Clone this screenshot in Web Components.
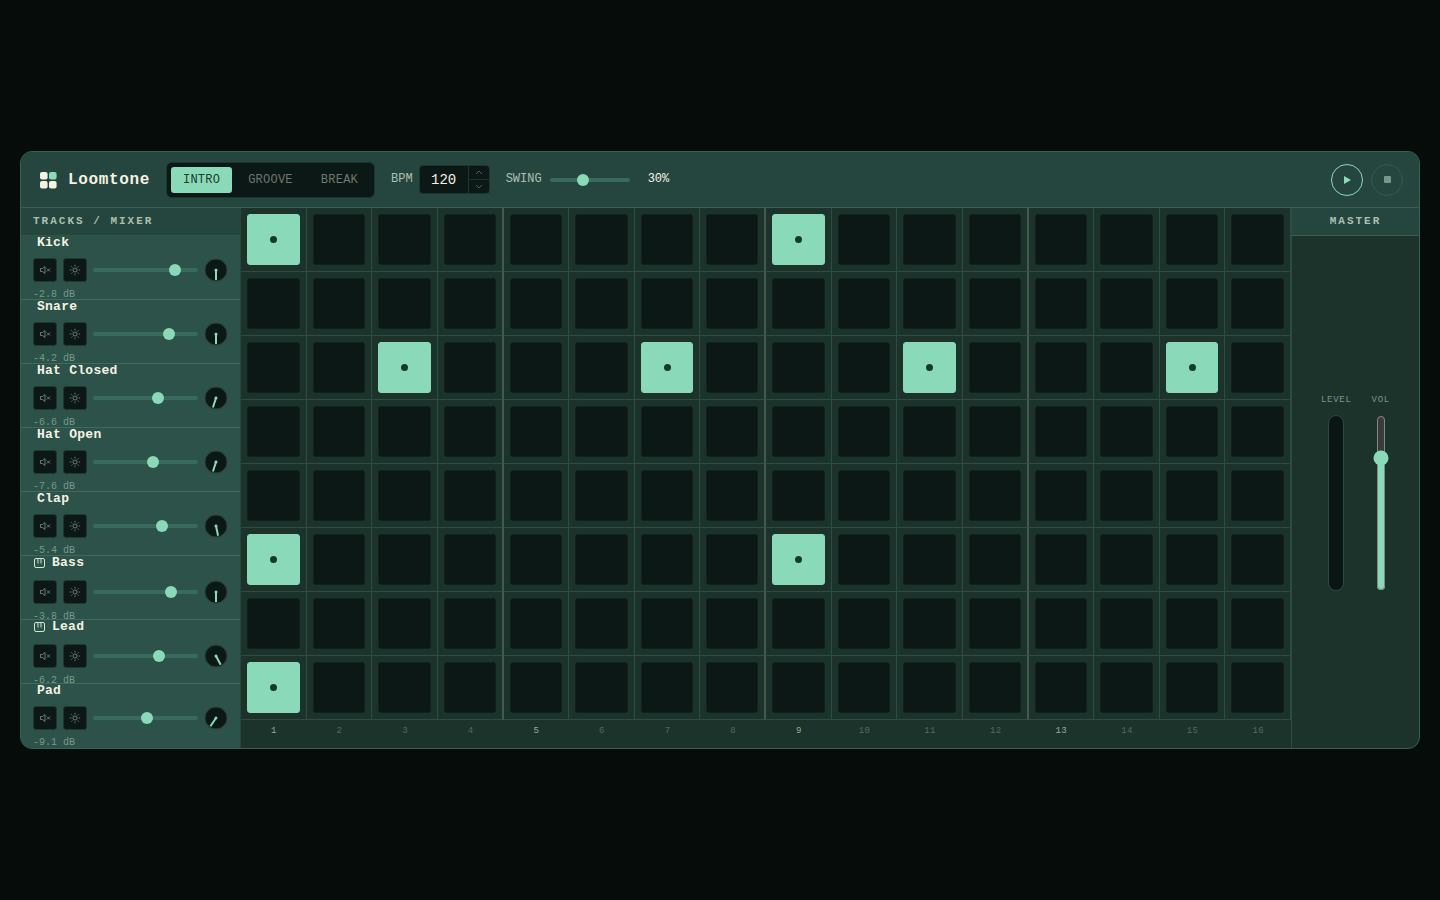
<!DOCTYPE html>
<html lang="en">
<head>
<meta charset="utf-8">
<meta name="viewport" content="width=device-width, initial-scale=1">
<title>Loomtone</title>
<style>
  :root {
    --bg: #060c0a;
    --well: #0c1815;
    --panel: #1c332c;
    --bar: #25463e;
    --row: #2d5249;
    --line: #3b5f55;
    --line-soft: #2d4c42;
    --groove: #396a5e;
    --mint: #8ad9b8;
    --cream: #f5f2e2;
    --muted: #aebfb0;
    --dim: #77988a;
  }

  body {
    margin: 0;
    min-height: 100vh;
    box-sizing: border-box;
    padding: 20px;
    display: grid;
    align-items: center;
    background: var(--bg);
    color: var(--cream);
    font-family: "Liberation Mono", monospace;
    font-size: 12px;
  }
</style>
</head>
<body>
<loom-app>
  <loom-header slot="header"></loom-header>
  <loom-mixer slot="mixer">
    <loom-track name="Kick" volume="82" pan="0" db="-2.8"></loom-track>
    <loom-track name="Snare" volume="75" pan="0" db="-4.2"></loom-track>
    <loom-track name="Hat Closed" volume="63" pan="18" db="-6.6"></loom-track>
    <loom-track name="Hat Open" volume="58" pan="18" db="-7.6"></loom-track>
    <loom-track name="Clap" volume="68" pan="-12" db="-5.4"></loom-track>
    <loom-track name="Bass" volume="77" pan="0" db="-3.8" melodic></loom-track>
    <loom-track name="Lead" volume="65" pan="-28" db="-6.2" melodic></loom-track>
    <loom-track name="Pad" volume="52" pan="34" db="-9.1"></loom-track>
  </loom-mixer>
  <loom-grid slot="grid"></loom-grid>
  <loom-master slot="master"></loom-master>
</loom-app>

<script>
class LoomApp extends HTMLElement {
  constructor() {
    super();
    this.attachShadow({ mode: "open" });
  }

  static get styles() {
    return `
      :host {
        display: block;
        min-width: 0;
        border: 1px solid var(--line);
        border-radius: 12px;
        overflow: hidden;
        background: var(--panel);
      }

      .body {
        display: grid;
        grid-template-columns: 220px minmax(0, 1fr) 128px;
      }
    `;
  }

  connectedCallback() {
    this.shadowRoot.innerHTML = `
    <style>${LoomApp.styles}</style>
    <slot name="header"></slot>
    <main class="body">
      <slot name="mixer"></slot>
      <slot name="grid"></slot>
      <slot name="master"></slot>
    </main>`;
  }
}

class LoomSlider extends HTMLElement {
  constructor() {
    super();
    this.attachShadow({ mode: "open" });
  }

  static get styles() {
    return `
      :host {
        display: flex;
        align-items: center;
      }

      input {
        appearance: none;
        width: 100%;
        height: 12px;
        margin: 0;
        background: none;
      }

      input::-webkit-slider-runnable-track {
        height: 4px;
        border-radius: 2px;
        background: var(--groove);
      }

      input::-webkit-slider-thumb {
        appearance: none;
        width: 12px;
        height: 12px;
        margin-top: -4px;
        border-radius: 50%;
        background: var(--mint);
      }
    `;
  }

  connectedCallback() {
    this.shadowRoot.innerHTML = `
    <style>${LoomSlider.styles}</style>
    <input type="range" min="0" max="100" value="${this.getAttribute("value")}" aria-label="${this.getAttribute("label")}">`;
  }
}

class LoomHeader extends HTMLElement {
  constructor() {
    super();
    this.attachShadow({ mode: "open" });
  }

  static get styles() {
    return `
      :host {
        display: flex;
        align-items: center;
        gap: 16px;
        height: 55px;
        padding: 0 16px 0 18px;
        background: var(--bar);
        border-bottom: 1px solid var(--line);
      }

      .brand {
        display: flex;
        align-items: center;
        gap: 11px;
        font-size: 16px;
        font-weight: 700;
        letter-spacing: 0.04em;
      }

      .scenes {
        display: flex;
        gap: 4px;
        padding: 4px;
        border: 1px solid #1d352f;
        border-radius: 6px;
        background: var(--well);
      }

      button {
        font: inherit;
        color: inherit;
        border: 0;
        background: none;
        padding: 0;
      }

      .scenes button {
        height: 26px;
        padding: 0 12px;
        border-radius: 3px;
        color: #6d7871;
        letter-spacing: 0.02em;
      }

      .scenes button.on {
        background: var(--mint);
        color: #1b3a31;
      }

      .field {
        display: flex;
        align-items: center;
        gap: 6px;
      }

      .field.wide {
        gap: 8px;
      }

      label, output {
        padding-bottom: 2px;
      }

      label {
        color: var(--muted);
      }

      .number {
        display: flex;
        height: 27px;
        border: 1px solid #1d352f;
        border-radius: 4px;
        background: var(--well);
      }

      .number input {
        width: 48px;
        box-sizing: border-box;
        padding: 0;
        border: 0;
        background: none;
        color: var(--cream);
        font: inherit;
        font-size: 14px;
        text-align: center;
        appearance: textfield;
      }

      .number input::-webkit-inner-spin-button {
        display: none;
      }

      .spin {
        display: grid;
        width: 20px;
        border-left: 1px solid #1d352f;
      }

      .spin button {
        display: grid;
        place-items: center;
      }

      .spin button + button {
        border-top: 1px solid #1d352f;
      }

      loom-slider {
        width: 80px;
      }

      output {
        margin-left: 10px;
      }

      .transport {
        display: flex;
        gap: 8px;
        margin-left: auto;
      }

      .transport button {
        display: grid;
        place-items: center;
        width: 32px;
        height: 32px;
        border: 1px solid #36584e;
        border-radius: 50%;
        color: #74988a;
      }

      .transport .play {
        border-color: var(--mint);
        color: var(--mint);
      }
    `;
  }

  connectedCallback() {
    this.shadowRoot.innerHTML = `
    <style>${LoomHeader.styles}</style>
    <div class="brand">
      <svg width="18" height="18" viewBox="0 0 18 18" aria-hidden="true">
        <g fill="#f5f2e2">
          <rect x="1" y="1" width="7.6" height="7.6" rx="2"/>
          <rect x="1" y="10" width="7.6" height="7.6" rx="2"/>
          <rect x="10" y="10" width="7.6" height="7.6" rx="2"/>
        </g>
        <rect x="10" y="1" width="7.6" height="7.6" rx="2" fill="#8ad9b8"/>
      </svg>
      <span>Loomtone</span>
    </div>
    <div class="scenes">
      <button class="on">INTRO</button>
      <button>GROOVE</button>
      <button>BREAK</button>
    </div>
    <div class="field">
      <label for="bpm">BPM</label>
      <div class="number">
        <input id="bpm" type="number" value="120">
        <div class="spin">
          <button aria-label="Faster"><svg width="8" height="5" viewBox="0 0 8 5" fill="none" stroke="#466359"><path d="M1 4l3-3 3 3"/></svg></button>
          <button aria-label="Slower"><svg width="8" height="5" viewBox="0 0 8 5" fill="none" stroke="#466359"><path d="M1 1l3 3 3-3"/></svg></button>
        </div>
      </div>
    </div>
    <div class="field wide">
      <label>SWING</label>
      <loom-slider value="40" label="Swing"></loom-slider>
      <output>30%</output>
    </div>
    <div class="transport">
      <button class="play" aria-label="Play"><svg width="8" height="8" viewBox="0 0 8 8" fill="currentColor"><path d="M1 0l7 4-7 4z"/></svg></button>
      <button aria-label="Stop"><svg width="7" height="7" viewBox="0 0 7 7" fill="currentColor"><rect width="7" height="7" rx="1"/></svg></button>
    </div>`;
    this.shadowRoot.querySelector(".wide label").addEventListener("click", () => {
      this.shadowRoot.querySelector("loom-slider").shadowRoot.querySelector("input").focus();
    });
  }
}

class LoomMixer extends HTMLElement {
  constructor() {
    super();
    this.attachShadow({ mode: "open" });
  }

  static get styles() {
    return `
      :host {
        display: block;
        box-sizing: border-box;
        background: var(--row);
        border-right: 1px solid #28463d;
      }

      h2 {
        height: 27px;
        margin: 0;
        padding: 0 12px;
        background: var(--bar);
        border-bottom: 1px solid #315449;
        color: var(--muted);
        font-size: 11px;
        line-height: 26px;
        letter-spacing: 2px;
      }
    `;
  }

  connectedCallback() {
    this.shadowRoot.innerHTML = `
    <style>${LoomMixer.styles}</style>
    <h2>TRACKS / MIXER</h2>
    <slot></slot>`;
  }
}

class LoomTrack extends HTMLElement {
  constructor() {
    super();
    this.attachShadow({ mode: "open" });
  }

  static get styles() {
    return `
      :host {
        display: flex;
        flex-direction: column;
        box-sizing: border-box;
        height: 64px;
        padding: 0 12px;
        border-bottom: 1px solid #3e6b5f;
      }

      :host(:last-of-type) {
        border-bottom-color: transparent;
      }

      .name {
        flex: none;
        display: flex;
        align-items: center;
        height: 14px;
        margin-bottom: 8px;
        padding-left: 4px;
        font-size: 13px;
        line-height: 14px;
        font-weight: 700;
        letter-spacing: 0.02em;
      }

      :host([melodic]) .name {
        gap: 6px;
        margin-bottom: 10px;
        padding-left: 0;
      }

      .controls {
        flex: none;
        display: flex;
        align-items: center;
        gap: 6px;
        height: 24px;
      }

      button {
        display: grid;
        place-items: center;
        box-sizing: border-box;
        width: 24px;
        height: 24px;
        padding: 0;
        border: 1px solid #1f3832;
        border-radius: 3px;
        background: var(--well);
        color: #83918a;
      }

      loom-slider {
        flex: 1;
      }

      .knob {
        flex: none;
        width: 24px;
        height: 24px;
      }

      .db {
        flex: none;
        color: var(--dim);
        font-size: 10px;
        line-height: 26px;
      }
    `;
  }

  get icon() {
    if (!this.hasAttribute("melodic")) return "";
    return `
      <svg width="13" height="12" viewBox="0 0 13 12" fill="none" stroke="#d5e3d5" aria-hidden="true">
        <rect x="1.5" y="1.5" width="10" height="9" rx="1.5"/>
        <path d="M5 1.5v5M8 1.5v5"/>
      </svg>`;
  }

  connectedCallback() {
    const name = this.getAttribute("name");
    this.shadowRoot.innerHTML = `
    <style>${LoomTrack.styles}</style>
    <div class="name">${this.icon}<span>${name}</span></div>
    <div class="controls">
      <button aria-label="Mute ${name}">
        <svg width="12" height="12" viewBox="0 0 12 12" fill="none" stroke="currentColor" stroke-width="0.8">
          <path d="M1.5 4.5h2l2.5-2v7l-2.5-2h-2zM8 4.5l3 3M11 4.5l-3 3"/>
        </svg>
      </button>
      <button aria-label="Solo ${name}">
        <svg width="12" height="12" viewBox="0 0 12 12" fill="none" stroke="currentColor" stroke-width="0.8">
          <circle cx="6" cy="6" r="2"/>
          <path d="M6 .8v1.7M6 9.5v1.7M.8 6h1.7M9.5 6h1.7M2.3 2.3l1.2 1.2M8.5 8.5l1.2 1.2M9.7 2.3l-1.2 1.2M3.5 8.5l-1.2 1.2"/>
        </svg>
      </button>
      <loom-slider value="${this.getAttribute("volume")}" label="${name} volume"></loom-slider>
      <svg class="knob" viewBox="0 0 24 24" role="img" aria-label="${name} pan">
        <circle cx="12" cy="12" r="11" fill="#0c1815" stroke="#25423a"/>
        <g transform="rotate(${this.getAttribute("pan")} 12 12)">
          <circle cx="12" cy="12" r="1.5" fill="#8ad9b8"/>
          <path d="M12 12v10" stroke="#8ad9b8" stroke-width="2"/>
        </g>
      </svg>
    </div>
    <div class="db">${this.getAttribute("db")} dB</div>`;
  }
}

class LoomGrid extends HTMLElement {
  constructor() {
    super();
    this.attachShadow({ mode: "open" });
    this.steps = 16;
    this.pattern = [[0, 8], [], [2, 6, 10, 14], [], [], [0, 8], [], [0]];
  }

  static get styles() {
    return `
      :host {
        display: block;
      }

      .row {
        display: grid;
        grid-template-columns: repeat(16, minmax(0, 1fr));
      }

      .cell {
        display: grid;
        box-sizing: border-box;
        height: 64px;
        padding: 6px;
        border-right: 1px solid var(--line-soft);
        border-bottom: 1px solid var(--line-soft);
      }

      .cell.beat {
        border-right: 2px solid #41594f;
      }

      button {
        display: grid;
        place-items: center;
        padding: 0;
        border: 1px solid #10201c;
        border-radius: 3px;
        background: var(--well);
      }

      button.on {
        border-color: var(--mint);
        background: var(--mint);
      }

      button.on::after {
        content: "";
        width: 7px;
        height: 7px;
        border-radius: 50%;
        background: #173a2e;
      }

      .numbers span {
        color: #4f6a5f;
        font-size: 9px;
        line-height: 22px;
        letter-spacing: 0.04em;
        text-align: center;
      }

      .numbers .strong {
        color: #94ab9c;
      }
    `;
  }

  renderCell(row, step) {
    const on = this.pattern[row].includes(step);
    const beat = step % 4 === 3 && step < this.steps - 1;
    return `<div class="cell ${beat ? "beat" : ""}"><button class="${on ? "on" : ""}" aria-pressed="${on}" aria-label="Row ${row + 1} step ${step + 1}"></button></div>`;
  }

  connectedCallback() {
    const steps = [...Array(this.steps).keys()];
    const rows = this.pattern.map((_, row) => `<div class="row">${steps.map((step) => this.renderCell(row, step)).join("")}</div>`);
    const numbers = steps.map((step) => `<span class="${step % 4 ? "" : "strong"}">${step + 1}</span>`);
    this.shadowRoot.innerHTML = `
    <style>${LoomGrid.styles}</style>
    ${rows.join("")}
    <div class="row numbers">${numbers.join("")}</div>`;
  }
}

class LoomMaster extends HTMLElement {
  constructor() {
    super();
    this.attachShadow({ mode: "open" });
  }

  static get styles() {
    return `
      :host {
        display: flex;
        flex-direction: column;
        border-left: 1px solid var(--line-soft);
      }

      h2 {
        height: 27px;
        margin: 0;
        background: var(--bar);
        border-bottom: 1px solid var(--line);
        color: var(--muted);
        font-size: 11px;
        line-height: 26px;
        letter-spacing: 2px;
        text-align: center;
      }

      .strips {
        flex: 1;
        display: flex;
        align-items: center;
        justify-content: center;
        gap: 20px;
      }

      .strip {
        display: flex;
        flex-direction: column;
        align-items: center;
        gap: 8px;
      }

      label, .label {
        color: var(--dim);
        font-size: 9px;
        line-height: 14px;
        letter-spacing: 0.08em;
      }

      .meter {
        box-sizing: border-box;
        width: 16px;
        height: 176px;
        border: 1px solid #304a42;
        border-radius: 8px;
        background: #0a1613;
      }

      input {
        writing-mode: vertical-lr;
        direction: rtl;
        width: 16px;
        height: 176px;
        margin: 0;
        color-scheme: dark;
        accent-color: var(--mint);
      }
    `;
  }

  connectedCallback() {
    this.shadowRoot.innerHTML = `
    <style>${LoomMaster.styles}</style>
    <h2>MASTER</h2>
    <div class="strips">
      <div class="strip">
        <span class="label">LEVEL</span>
        <div class="meter"></div>
      </div>
      <div class="strip">
        <label for="volume">VOL</label>
        <input id="volume" type="range" min="0" max="100" value="78">
      </div>
    </div>`;
  }
}

customElements.define("loom-slider", LoomSlider);
customElements.define("loom-header", LoomHeader);
customElements.define("loom-track", LoomTrack);
customElements.define("loom-mixer", LoomMixer);
customElements.define("loom-grid", LoomGrid);
customElements.define("loom-master", LoomMaster);
customElements.define("loom-app", LoomApp);
</script>
</body>
</html>
